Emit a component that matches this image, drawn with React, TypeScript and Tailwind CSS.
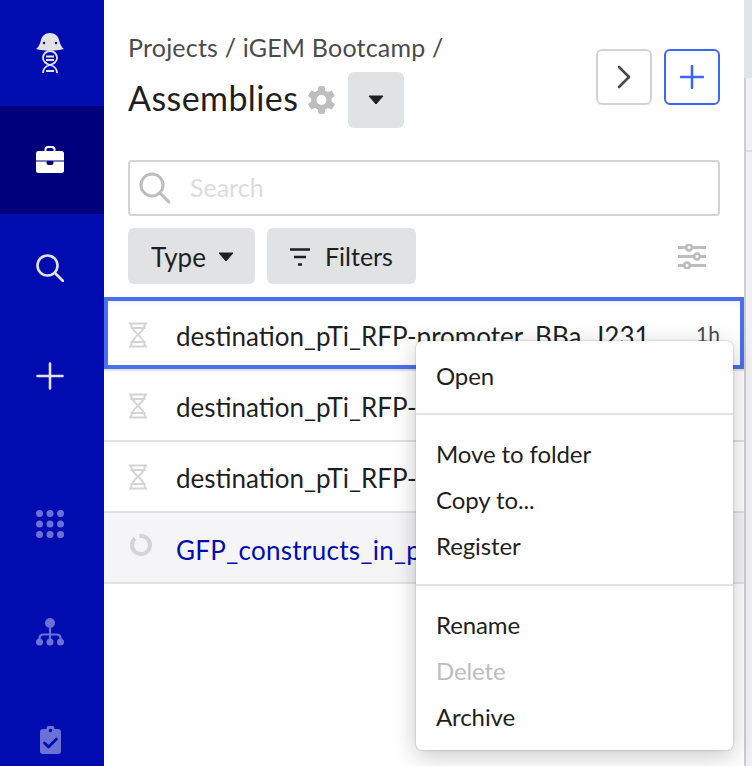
import React from "react";

const font = "font-['Lato','Liberation_Sans',sans-serif]";

function Hourglass({ className }: { className: string }) {
  return (
    <svg width="20" height="26" viewBox="0 0 20 26" fill="none" stroke="#d4d4d4" strokeWidth="2" className={`shrink-0 ${className}`}>
      <path d="M1 1.500h18M2.500 6h15M3 2c0 9 14 12 14 22M17 2c0 9-14 12-14 22M2.500 20h15M1 24.500h18" />
    </svg>
  );
}

function SideIcon({ children, active }: { children: React.ReactNode; active?: boolean }) {
  return (
    <div className={`flex h-[108px] shrink-0 items-center justify-center pr-1 ${active ? "bg-[#00007c]" : ""}`}>{children}</div>
  );
}

function Caret() {
  return (
    <svg width="16" height="10" viewBox="0 0 16 10">
      <path d="M1 1h14L8 9z" fill="#1f1f21" stroke="#1f1f21" strokeLinejoin="round" />
    </svg>
  );
}

export default function App() {
  return (
    <div className={`${font} relative flex h-[766px] w-[752px] overflow-hidden bg-white text-[#1f1f21]`}>
      <aside className="flex h-full w-[104px] shrink-0 flex-col overflow-hidden bg-[#000bb0]">
        <div className="flex h-[106px] shrink-0 items-center justify-center pr-1">
          <svg width="28" height="40" viewBox="0 0 28 40">
            <path d="M0 16C3 14 4 10 5 7 6 3 9 0 14 0s8 3 9 7c1 3 2 7 5 9-9 2-19 2-28 0z" fill="#e2e2e4" />
            <circle cx="8" cy="10" r="1.200" fill="#000bb0" />
            <circle cx="20" cy="10" r="1.200" fill="#000bb0" />
            <g fill="none" stroke="#e2e2e4" strokeWidth="1.800">
              <path d="M14 32C8 30 7 27 7 25c0-4 3-7 7-7s7 3 7 7c0 2-1 5-7 7M14 32c4 1 7 3 7 8M14 32c-4 1-7 3-7 8" />
              <path d="M10 23.500h8M10 27h8M10 38h8" />
            </g>
          </svg>
        </div>
        <SideIcon active>
          <svg width="28" height="28" viewBox="0 0 28 28">
            <path d="M9.500 6V3.500C9.500 2 10.500 1 12 1h4c1.500 0 2.500 1 2.500 2.500V6" fill="none" stroke="#fff" strokeWidth="2" />
            <rect x="0" y="5" width="28" height="22" rx="2.500" fill="#fff" />
            <path d="M0 15h10.500M17.500 15H28" stroke="#00007c" strokeWidth="1" />
            <path d="M10.500 14.500h7V17a2 2 0 0 1-2 2h-3a2 2 0 0 1-2-2z" fill="#00007c" />
          </svg>
        </SideIcon>
        <SideIcon>
          <svg width="28" height="28" viewBox="0 0 28 28" fill="none" stroke="#e2e2e4" strokeWidth="2.600" strokeLinecap="round">
            <circle cx="11.500" cy="11.500" r="10" />
            <path d="M19 19l8 8" />
          </svg>
        </SideIcon>
        <SideIcon>
          <svg width="28" height="28" viewBox="0 0 28 28" fill="none" stroke="#e2e2e4" strokeWidth="2.600" strokeLinecap="round">
            <path d="M14 1.500v25M1.500 14h25" />
          </svg>
        </SideIcon>
        <div className="h-10 shrink-0" />
        <SideIcon>
          <svg width="28" height="28" viewBox="0 0 28 28" fill="#6b72d6">
            {[3.5, 14, 24.5].flatMap((y) => [3.5, 14, 24.5].map((x) => <circle key={`${x}-${y}`} cx={x} cy={y} r="3.500" />))}
          </svg>
        </SideIcon>
        <SideIcon>
          <svg width="28" height="28" viewBox="0 0 28 28" fill="#6b72d6">
            <circle cx="14" cy="5" r="5" />
            <circle cx="3.500" cy="24" r="3.500" />
            <circle cx="14" cy="24" r="3.500" />
            <circle cx="24.500" cy="24" r="3.500" />
            <path d="M3.500 23v-2.500c0-2.500 1.500-4 4-4h13c2.500 0 4 1.500 4 4V23M14 9v14" fill="none" stroke="#6b72d6" strokeWidth="2.200" />
          </svg>
        </SideIcon>
        <SideIcon>
          <svg width="21" height="28" viewBox="0 0 21 28">
            <path d="M3 3h3.500a4 4 0 0 1 8 0H18a3 3 0 0 1 3 3v19a3 3 0 0 1-3 3H3a3 3 0 0 1-3-3V6a3 3 0 0 1 3-3z" fill="#6b72d6" />
            <circle cx="10.500" cy="4.500" r="1.700" fill="#000bb0" />
            <path d="M4.500 17l4 4 8-8" fill="none" stroke="#000bb0" strokeWidth="2.800" strokeLinecap="round" strokeLinejoin="round" />
          </svg>
        </SideIcon>
      </aside>

      <main className="flex h-full w-[640px] shrink-0 flex-col">
        <header className="flex shrink-0 justify-between pl-6 pr-6 pt-[32px]">
          <div>
            <div className="text-[25px] leading-[30px] tracking-[0.2px] text-[#4a4a4c]">Projects / iGEM Bootcamp /</div>
            <div className="mt-[10px] flex items-center">
              <h1 className="pb-[4px] text-[34px] leading-[52px] font-normal tracking-[0.4px]">Assemblies</h1>
              <svg className="ml-[10px]" width="27" height="28" viewBox="3.400 3.200 17.200 17.600" fill="#bdbdbd">
                <path d="M19.400 13a7.500 7.500 0 0 0 0-2l2.100-1.600-2-3.500-2.500 1a7.500 7.500 0 0 0-1.700-1L15 3.200h-4l-.4 2.700a7.500 7.500 0 0 0-1.700 1l-2.500-1-2 3.500L6.500 11a7.500 7.500 0 0 0 0 2l-2.100 1.600 2 3.500 2.500-1a7.500 7.500 0 0 0 1.700 1l.4 2.700h4l.4-2.700a7.500 7.500 0 0 0 1.700-1l2.500 1 2-3.500zM13 15.200a3.200 3.200 0 1 1 0-6.400 3.200 3.200 0 0 1 0 6.400z" transform="translate(-1 0)" />
              </svg>
              <button className="ml-[13px] flex h-14 w-14 items-center justify-center rounded-md bg-[#e1e2e4]">
                <Caret />
              </button>
            </div>
          </div>
          <div className="mt-[17px] flex gap-3">
            <button className="flex h-14 w-14 items-center justify-center rounded-md border-2 border-[#d4d4d4] bg-white">
              <svg width="14" height="24" viewBox="0 0 14 24" fill="none" stroke="#4a4a4c" strokeWidth="2.600" strokeLinecap="round" strokeLinejoin="round"><path d="M2 2l10 10L2 22" /></svg>
            </button>
            <button className="flex h-14 w-14 items-center justify-center rounded-md border-2 border-[#3d66f5] bg-white">
              <svg width="24" height="24" viewBox="0 0 24 24" fill="none" stroke="#3d66f5" strokeWidth="2.600" strokeLinecap="round"><path d="M12 1v22M1 12h22" /></svg>
            </button>
          </div>
        </header>

        <div className="mx-6 mt-[32px] flex h-14 w-[592px] shrink-0 items-center rounded border-2 border-[#d4d4d4] pl-2">
          <svg width="34" height="34" viewBox="0 0 34 34" fill="none" stroke="#bdbdbd" strokeWidth="3" strokeLinecap="round"><circle cx="14" cy="14" r="11" /><path d="M22 22l9 9" /></svg>
          <span className="ml-[18px] text-[25px] text-[#dcdcdc]">Search</span>
        </div>

        <div className="mx-6 mt-3 flex shrink-0 items-center">
          <button className="flex h-14 w-[127px] items-center justify-center gap-[12px] rounded-md bg-[#e1e2e4] pl-[2px] pt-[2px] text-[26px]">
            Type
            <Caret />
          </button>
          <button className="ml-3 flex h-14 w-[149px] items-center justify-start gap-[14px] rounded-md bg-[#e1e2e4] pl-[22px] pt-[2px] text-[25px]">
            <svg width="22" height="18" viewBox="0 0 22 18" stroke="#1f1f21" strokeWidth="2.400"><path d="M1 1.500h20M5 9h12M9 16.500h4" /></svg>
            Filters
          </button>
          <svg className="ml-auto mr-[14px]" width="28" height="25" viewBox="0 0 28 25" fill="#fff" stroke="#bdbdbd" strokeWidth="2.800">
            <path d="M0 3.500h28M0 12.500h28M0 21.500h28" />
            <circle cx="11" cy="3.500" r="2.800" /><circle cx="19" cy="12.500" r="2.800" /><circle cx="9" cy="21.500" r="2.800" />
          </svg>
        </div>

        <ul className="mt-[13px] flex shrink-0 flex-col text-[26px]">
          <li className="flex h-[72px] items-center border-[4px] border-[#4a70f0] pl-[20px] pr-5 shadow-[inset_0_6px_6px_-6px_rgba(0,0,0,0.12),0_2px_0_#e1e2e4]">
            <Hourglass className="mt-1" />
            <span className="ml-7 whitespace-nowrap pt-[6px]">destination_pTi_RFP-promoter_BBa_J231</span>
            <span className="ml-auto pt-[2px] text-[21px] text-[#4a4a4c]">1h</span>
          </li>
          <li className="flex h-[73px] items-center border-b-2 border-[#e1e2e4] pl-[24px]">
            <Hourglass className="mt-[2px]" />
            <span className="ml-7 whitespace-nowrap pt-[6px]">destination_pTi_RFP-promoter_BBa_J231</span>
          </li>
          <li className="flex h-[71px] items-center border-b-2 border-[#e1e2e4] pl-[24px]">
            <Hourglass className="mt-px" />
            <span className="ml-7 whitespace-nowrap pt-[4px]">destination_pTi_RFP-promoter_BBa_J231</span>
          </li>
          <li className="flex h-[71px] items-center border-b-2 border-[#e1e2e4] bg-[#f5f5f8] pl-[26px] text-[#000bb0]">
            <svg className="mb-[5px] shrink-0" width="22" height="22" viewBox="0 0 22 22" fill="none" stroke="#d4d4d4" strokeWidth="4">
              <circle cx="11" cy="11" r="9" strokeDasharray="51 5.500" transform="rotate(-100 11 11)" />
            </svg>
            <span className="ml-[24px] whitespace-nowrap pt-[5px] tracking-[0.3px]">GFP_constructs_in_pTi_backbone</span>
          </li>
        </ul>
      </main>

      <div className="flex h-full flex-1 flex-col">
        <div className="h-[78px] shrink-0 bg-[#e3e4e6]" />
        <div className="flex flex-1 flex-col border-l-2 border-[#cdcdd2] bg-[#f1f1f3]">
          <div className="mt-[72px] h-[2px] bg-[#dedee0]" />
        </div>
      </div>

      <div className="absolute left-[416px] top-[341px] z-10 w-[317px] rounded-md bg-white text-[24px] leading-[30px] tracking-[-0.1px] shadow-[0_0_2px_rgba(0,0,0,0.3),0_6px_24px_rgba(0,0,0,0.22)]">
        <div className="px-5 pb-[22px] pt-5">Open</div>
        <div className="flex flex-col gap-4 border-t-2 border-[#e1e2e4] px-5 pb-[23px] pt-6">
          <div>Move to folder</div>
          <div>Copy to...</div>
          <div>Register</div>
        </div>
        <div className="flex flex-col gap-4 border-t-2 border-[#e1e2e4] px-5 pb-[18px] pt-6">
          <div>Rename</div>
          <div className="text-[#bdbdbd]">Delete</div>
          <div>Archive</div>
        </div>
      </div>
    </div>
  );
}
